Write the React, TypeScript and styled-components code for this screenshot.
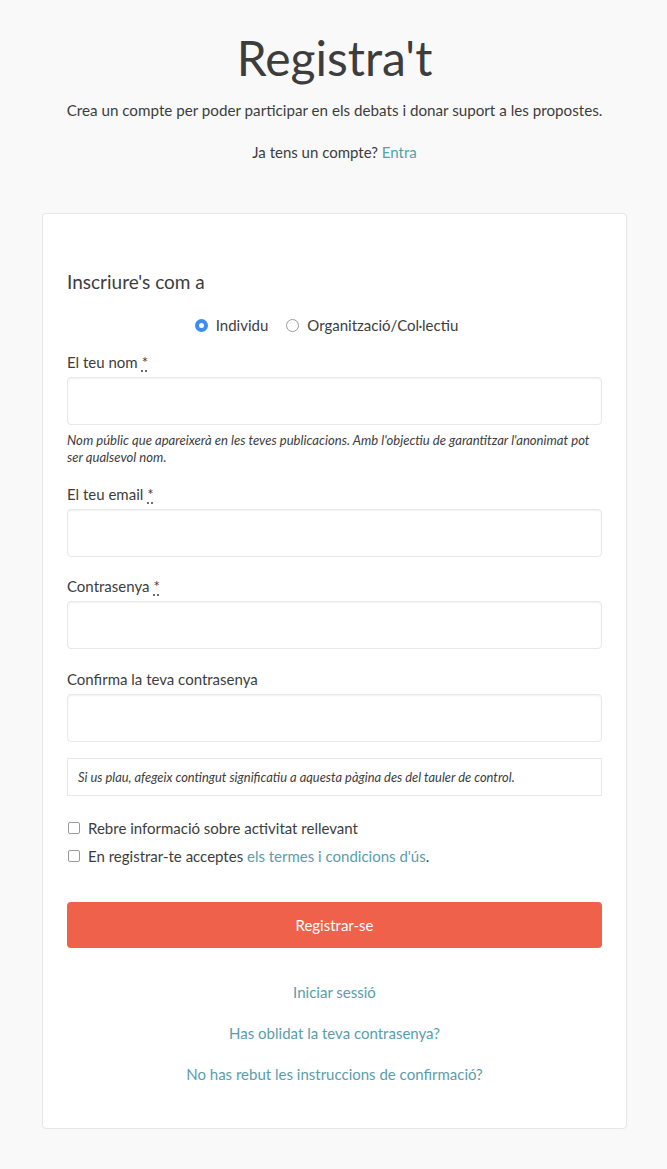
import React from "react";
import styled, { createGlobalStyle } from "styled-components";

const Global = createGlobalStyle`
  html, body { margin: 0; padding: 0; background: #f9f9f9; }
  body { font-family: "Lato", "Open Sans", sans-serif; color: #3d3d3d; }
  * { box-sizing: border-box; }
`;

const Page = styled.div`
  display: flex;
  flex-direction: column;
  align-items: center;
  padding: 28px 40px 40px 42px;
`;

const Title = styled.h1`
  margin: 0;
  font-size: 48px;
  font-weight: 400;
  line-height: 60px;
  color: #3d3d3d;
`;

const Lead = styled.p`
  margin: 10px 0 0 0;
  font-size: 15.2px;
  line-height: 24px;
  color: #3d3d3d;
`;

const Sub = styled.p`
  margin: 18px 0 0 0;
  font-size: 15px;
  line-height: 24px;
`;

const Link = styled.a`
  color: #5b9dab;
  text-decoration: none;
`;

const Card = styled.div`
  align-self: stretch;
  margin-top: 49px;
  background: #fff;
  border: 1px solid #e6e6e6;
  border-radius: 4px;
  padding: 55px 24px 43px 24px;
  display: flex;
  flex-direction: column;
`;

const SectionTitle = styled.h2`
  margin: 0;
  font-size: 19px;
  font-weight: 400;
  line-height: 26px;
`;

const RadioRow = styled.div`
  display: flex;
  justify-content: center;
  gap: 18px;
  margin-top: 20px;
  padding-right: 16px;
  font-size: 15px;
  line-height: 20px;
`;

const RadioOpt = styled.label`
  display: flex;
  align-items: center;
  gap: 8px;
`;

const RadioDot = styled.span<{ $on?: boolean }>`
  width: 13px;
  height: 13px;
  border-radius: 50%;
  border: ${(p) => (p.$on ? "4px solid #3b8df0" : "1px solid #9a9a9a")};
  background: #fff;
  display: inline-block;
`;

const Field = styled.div<{ $mt: number }>`
  margin-top: ${(p) => p.$mt}px;
  display: flex;
  flex-direction: column;
`;

const Label = styled.label`
  font-size: 15px;
  line-height: 20px;
  color: #3d3d3d;
`;

const Req = styled.abbr`
  text-decoration: underline dotted;
  text-underline-offset: 3px;
  margin-left: 4px;
`;

const Input = styled.div`
  margin-top: 5px;
  height: 48px;
  border: 1px solid #e8e8e8;
  border-radius: 4px;
  box-shadow: inset 0 1px 2px rgba(0, 0, 0, 0.06);
  background: #fff;
`;

const Help = styled.p`
  margin: 7px 0 0 0;
  font-size: 13.1px;
  line-height: 17px;
  font-style: italic;
  color: #3d3d3d;
`;

const Note = styled.div`
  margin-top: 16px;
  border: 1px solid #e8e8e8;
  padding: 9px 10px;
  font-size: 12.9px;
  line-height: 18px;
  font-style: italic;
`;

const Checks = styled.div`
  margin-top: 22px;
  display: flex;
  flex-direction: column;
  gap: 8px;
`;

const CheckRow = styled.label`
  display: flex;
  align-items: center;
  gap: 8px;
  font-size: 15px;
  line-height: 20px;
`;

const Box = styled.span`
  width: 12px;
  height: 12px;
  border: 1px solid #9a9a9a;
  border-radius: 2px;
  margin-left: 1px;
  display: inline-block;
`;

const Button = styled.button`
  margin-top: 36px;
  height: 46px;
  border: none;
  border-radius: 4px;
  background: #f0614c;
  color: #fff;
  font-family: inherit;
  font-size: 15px;
`;

const Links = styled.div`
  margin-top: 34px;
  display: flex;
  flex-direction: column;
  align-items: center;
  gap: 20px;
  font-size: 15px;
  line-height: 21px;
`;

export default function App() {
  return (
    <>
      <Global />
      <Page>
        <Title>Registra't</Title>
        <Lead>Crea un compte per poder participar en els debats i donar suport a les propostes.</Lead>
        <Sub>
          Ja tens un compte? <Link href="#">Entra</Link>
        </Sub>
        <Card>
          <SectionTitle>Inscriure's com a</SectionTitle>
          <RadioRow>
            <RadioOpt>
              <RadioDot $on />
              Individu
            </RadioOpt>
            <RadioOpt>
              <RadioDot />
              Organització/Col·lectiu
            </RadioOpt>
          </RadioRow>
          <Field $mt={17}>
            <Label>
              El teu nom<Req title="required">*</Req>
            </Label>
            <Input />
            <Help>
              Nom públic que apareixerà en les teves publicacions. Amb l'objectiu de garantitzar l'anonimat pot ser qualsevol nom.
            </Help>
          </Field>
          <Field $mt={18}>
            <Label>
              El teu email<Req title="required">*</Req>
            </Label>
            <Input />
          </Field>
          <Field $mt={19}>
            <Label>
              Contrasenya<Req title="required">*</Req>
            </Label>
            <Input />
          </Field>
          <Field $mt={20}>
            <Label>Confirma la teva contrasenya</Label>
            <Input />
          </Field>
          <Note>Si us plau, afegeix contingut significatiu a aquesta pàgina des del tauler de control.</Note>
          <Checks>
            <CheckRow>
              <Box />
              Rebre informació sobre activitat rellevant
            </CheckRow>
            <CheckRow>
              <Box />
              <span>
                En registrar-te acceptes <Link href="#">els termes i condicions d'ús</Link>.
              </span>
            </CheckRow>
          </Checks>
          <Button>Registrar-se</Button>
          <Links>
            <Link href="#">Iniciar sessió</Link>
            <Link href="#">Has oblidat la teva contrasenya?</Link>
            <Link href="#">No has rebut les instruccions de confirmació?</Link>
          </Links>
        </Card>
      </Page>
    </>
  );
}
